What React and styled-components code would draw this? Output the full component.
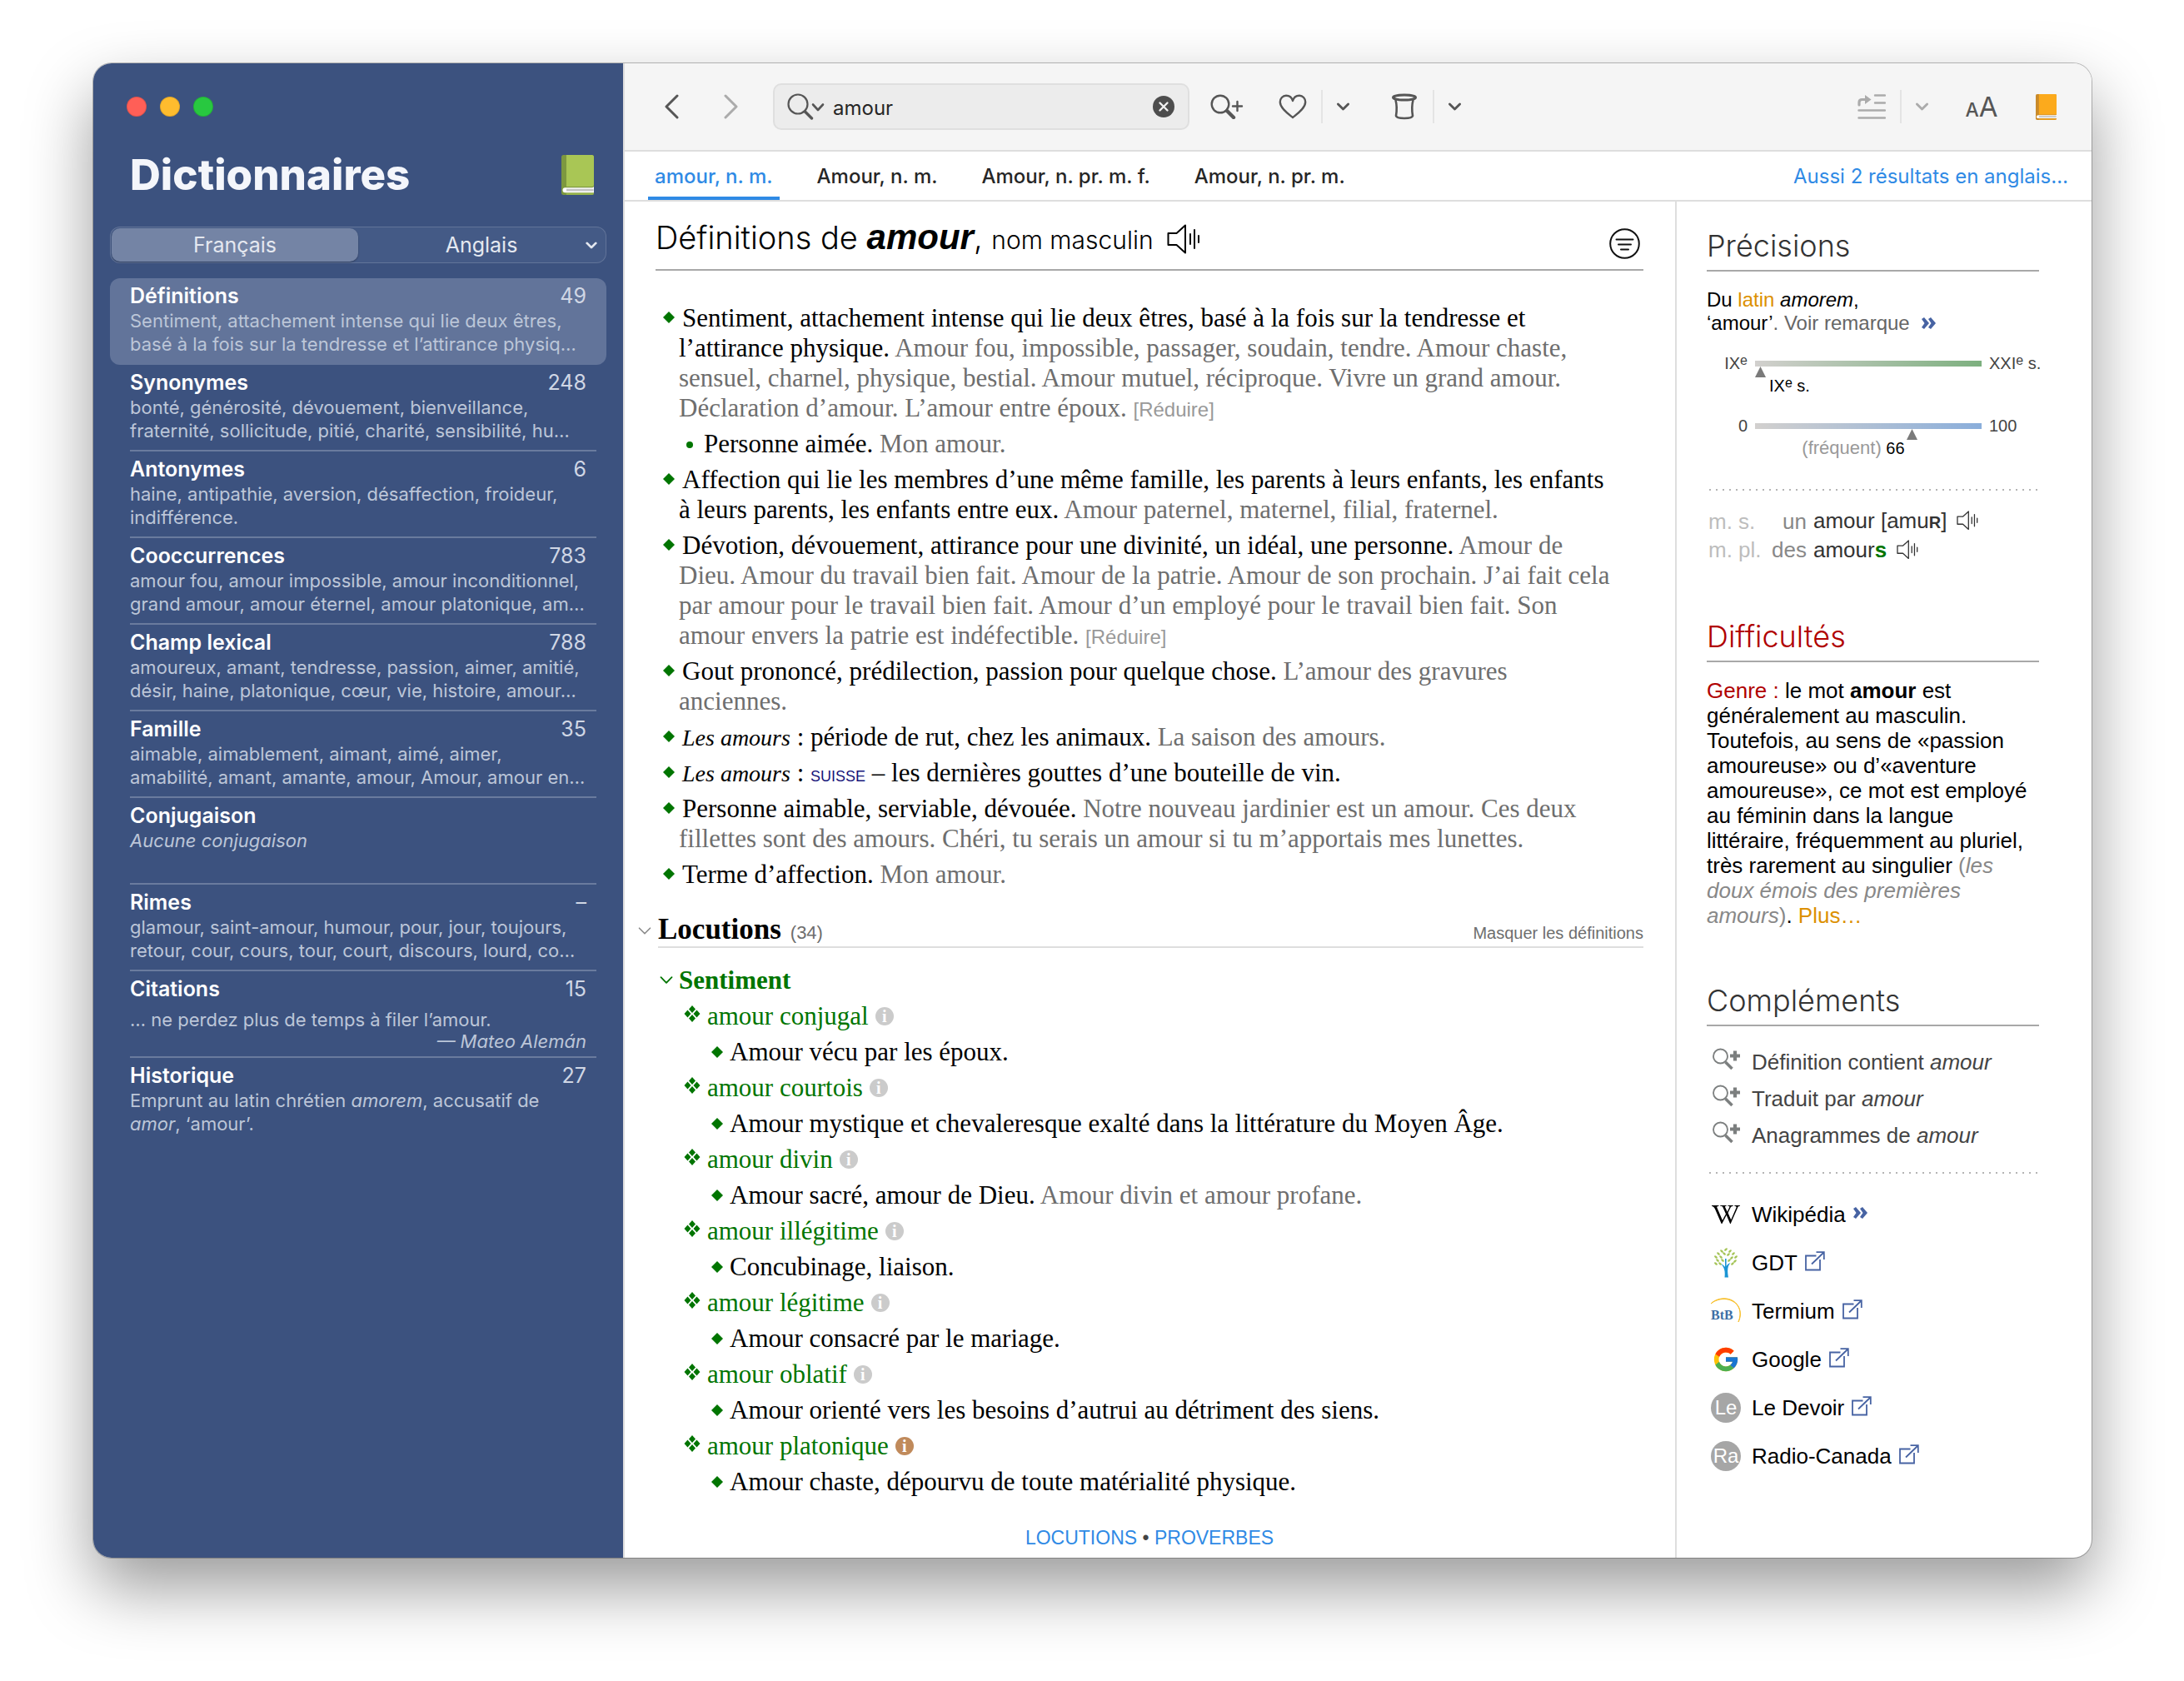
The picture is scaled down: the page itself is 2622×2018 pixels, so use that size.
import React, { useState } from 'react';
import styled, { createGlobalStyle } from 'styled-components';
import { FcGoogle } from 'react-icons/fc';
import { FaWikipediaW } from 'react-icons/fa6';

const colors = {
  navy: '#3c527f',
  blue: '#2f8ae5',
  link: '#4763a3',
  green: '#007500',
  red: '#b00000',
  orange: '#dc9000',
  line: '#dedede',
  rule: '#a8a8a8',
  icon: '#565656',
  example: '#6e6e6e',
};

const fonts = {
  ui: "'Inter', 'Liberation Sans', sans-serif",
  sans: "'Liberation Sans', Arial, sans-serif",
  serif: "'Liberation Serif', 'Times New Roman', serif",
};

const GlobalStyle = createGlobalStyle`
  *, *::before, *::after {
    box-sizing: border-box;
  }
  body {
    margin: 0;
    background: #fff;
    font-family: ${fonts.sans};
    color: #000;
  }
  button {
    border: none;
    padding: 0;
    background: none;
    font: inherit;
    color: inherit;
    cursor: pointer;
  }
  a {
    color: inherit;
    text-decoration: none;
  }
  h1, h2, h3, p, ul {
    margin: 0;
    padding: 0;
  }
  ul {
    list-style: none;
  }
  svg {
    display: block;
    flex: none;
  }
`;

const Page = styled.div`
  display: flex;
  min-height: 100vh;
  padding: 76px 111px 148px 112px;
`;

const Window = styled.div`
  display: flex;
  flex: 1;
  border-radius: 22px;
  overflow: hidden;
  background: #fff;
  box-shadow: 0 0 0 1px rgba(0, 0, 0, 0.25), 0 36px 80px rgba(0, 0, 0, 0.4);
`;

/* Sidebar */

const Sidebar = styled.nav`
  flex: none;
  width: 638px;
  padding: 40px 20px 0;
  border-right: 2px solid ${colors.line};
  background: ${colors.navy};
  font-family: ${fonts.ui};
`;

const Lights = styled.div`
  display: flex;
  gap: 16px;
  padding-left: 20px;
`;

const Light = styled.button`
  width: 24px;
  height: 24px;
  border-radius: 50%;
  border: 1px solid rgba(0, 0, 0, 0.12);
  background: ${({ color }) => color};
`;

const SidebarHead = styled.div`
  display: flex;
  align-items: center;
  justify-content: space-between;
  margin-top: 40px;
  padding: 0 15px 0 24px;
`;

const SidebarTitle = styled.h1`
  font-size: 51px;
  line-height: 60px;
  font-weight: 800;
  color: #f4f6fb;
`;

const Segments = styled.div`
  display: flex;
  height: 44px;
  margin-top: 32px;
  padding: 1px;
  border: 1px solid rgba(255, 255, 255, 0.16);
  border-radius: 12px;
  background: #445a86;
`;

const Segment = styled.button`
  flex: 1;
  border-radius: 10px;
  font-size: 25px;
  color: #e4e8f0;
  background: ${({ $active }) => $active ? '#7484a5' : 'transparent'};
  box-shadow: ${({ $active }) => $active ? '0 1px 2px rgba(0, 0, 0, 0.3)' : 'none'};
`;

const SegmentWrapper = styled.div`
  display: flex;
  flex: 1;
  align-items: stretch;
`;

const SegmentMenu = styled.button`
  display: flex;
  align-items: center;
  justify-content: center;
  width: 32px;
  margin-left: -32px;
`;

const Sections = styled.ul`
  margin-top: 18px;
`;

const SectionItem = styled.li`
  height: 104px;
  padding: 0 12px 0 24px;
  border-radius: 12px;
  background: ${({ $active }) => $active ? '#62749a' : 'transparent'};
`;

const SectionLink = styled.a`
  display: block;
  height: 100%;
  padding-top: 5px;
  border-bottom: 2px solid ${({ $ruled }) => $ruled ? '#6a7b9e' : 'transparent'};
`;

const SectionHead = styled.span`
  display: flex;
  justify-content: space-between;
  padding-right: 12px;
  font-size: 25px;
  line-height: 32px;
  color: #d0d7e5;
`;

const SectionName = styled.span`
  font-weight: 600;
  color: #fff;
`;

const Preview = styled.span`
  display: block;
  font-size: 22px;
  line-height: 28px;
  white-space: nowrap;
  color: #bcc6d8;
`;

const Quote = styled(Preview)`
  padding: 8px 12px 0 0;
  line-height: 26px;
`;

const Author = styled.em`
  display: block;
  text-align: right;
`;

/* Toolbar and tabs */

const Content = styled.div`
  display: flex;
  flex: 1;
  flex-direction: column;
  min-width: 0;
`;

const Toolbar = styled.header`
  display: flex;
  align-items: center;
  height: 106px;
  padding: 0 16px 0 20px;
  border-bottom: 2px solid ${colors.line};
  background: #f5f5f5;
  font-family: ${fonts.ui};
  color: ${colors.icon};
`;

const ToolButton = styled.button`
  display: flex;
  align-items: center;
  justify-content: center;
  width: ${({ $width }) => $width || 72}px;
  height: 56px;
  color: ${({ $dim }) => $dim ? '#ababab' : 'inherit'};
`;

const ToolGroup = styled.div`
  display: flex;
  align-items: center;
  margin-right: ${({ $last }) => $last ? 10 : 16}px;
`;

const Separator = styled.span`
  width: 2px;
  height: 40px;
  background: #e4e4e4;
`;

const Spacer = styled.div`
  flex: 1;
`;

const SearchField = styled.label`
  display: flex;
  align-items: center;
  gap: 10px;
  width: 500px;
  height: 56px;
  margin-left: 14px;
  padding: 0 16px 0 15px;
  border: 2px solid #dfdfdf;
  border-radius: 10px;
  background: #ececec;
`;

const SearchInput = styled.input`
  flex: 1;
  min-width: 0;
  padding: 2px 0 0;
  border: none;
  outline: none;
  background: transparent;
  font: 24px ${fonts.ui};
  color: #262626;
`;

const TabBar = styled.div`
  display: flex;
  align-items: stretch;
  gap: 37px;
  height: 60px;
  padding: 0 28px;
  border-bottom: 2px solid ${colors.line};
  font-family: ${fonts.ui};
`;

const Tab = styled.button`
  padding: 4px 8px 0;
  border-bottom: 4px solid ${({ $active }) => $active ? colors.blue : 'transparent'};
  font-size: 24px;
  font-weight: 500;
  color: ${({ $active }) => $active ? colors.blue : '#262626'};
`;

const OtherResults = styled.a`
  margin-left: auto;
  font-size: 24px;
  line-height: 60px;
  color: ${colors.blue};
`;

/* Article */

const Columns = styled.div`
  display: flex;
  flex: 1;
`;

const Article = styled.main`
  display: flex;
  flex: 1;
  flex-direction: column;
  min-width: 0;
  padding: 0 38px 9px 37px;
`;

const ArticleHead = styled.div`
  display: flex;
  align-items: flex-start;
  justify-content: space-between;
  padding: 19px 4px 11px 0;
  border-bottom: 2px solid ${colors.rule};
`;

const ArticleTitle = styled.h1`
  display: flex;
  align-items: baseline;
  font-family: ${fonts.ui};
  font-size: 38px;
  line-height: 48px;
  font-weight: 300;
  white-space: pre;

  em {
    font-family: ${fonts.sans};
    font-size: 42px;
    font-weight: 700;
  }
`;

const WordClass = styled.span`
  margin-right: 16px;
  font-size: 30px;
`;

const FilterButton = styled.button`
  margin-top: 13px;
`;

const SoundButton = styled.button`
  display: inline-block;
  vertical-align: middle;
  align-self: center;
`;

const Definitions = styled.ul`
  display: flex;
  flex-direction: column;
  gap: 7px;
  margin-top: 39px;
  font: 31px/36px ${fonts.serif};
`;

const Definition = styled.li`
  padding-left: ${({ $sub }) => $sub ? 54 : 28}px;
  text-indent: ${({ $sub }) => $sub ? -17 : -19}px;

  svg {
    display: inline-block;
    vertical-align: 4px;
    margin-right: ${({ $sub }) => $sub ? 13 : 9}px;
  }
  i {
    font-size: 28px;
    line-height: 1;
  }
`;

const Example = styled.span`
  color: ${colors.example};
`;

const Region = styled.abbr`
  font: 18px/1 ${fonts.sans};
  text-transform: uppercase;
  color: #15157a;
`;

const Toggle = styled.button`
  font-family: ${fonts.sans};
  font-size: ${({ $small }) => $small ? 20 : 24}px;
  line-height: 24px;
  text-indent: 0;
  color: ${({ $small }) => $small ? colors.example : '#999'};
`;

const GroupRow = styled.div`
  display: flex;
  align-items: center;
  gap: 8px;
  margin: 28px 0 17px -21px;
  
  > svg {
    color: #8a8a8a;
  }
`;

const GroupHead = styled.div`
  display: flex;
  flex: 1;
  align-items: baseline;
  border-bottom: 2px solid ${colors.line};
`;

const GroupTitle = styled.h2`
  font: bold 35px/40px ${fonts.serif};
`;

const GroupCount = styled.span`
  margin: 0 auto 0 11px;
  font-size: 22px;
  color: ${colors.example};
`;

const SenseRow = styled.div`
  display: flex;
  align-items: center;
  gap: 7px;
  padding-left: 5px;
  color: ${colors.green};
`;

const SenseTitle = styled.h3`
  font: bold 31px/43px ${fonts.serif};
`;

const Phrase = styled.li`
  font: 31px/43px ${fonts.serif};
`;

const PhraseTerm = styled.div`
  display: flex;
  align-items: center;
  gap: 8px;
  padding-left: 34px;
  color: ${colors.green};
`;

const PhraseMeaning = styled.div`
  display: flex;
  align-items: center;
  gap: 8px;
  padding-left: 67px;
`;

const Info = styled.button`
  width: 22px;
  height: 22px;
  border-radius: 50%;
  background: ${({ $marked }) => $marked ? '#c08a5b' : '#cbcbcb'};
  font: bold 20px/22px ${fonts.serif};
  color: #fff;
`;

const JumpLinks = styled.div`
  margin-top: auto;
  font-size: 23px;
  line-height: 30px;
  text-align: center;
  color: #444;

  a {
    color: ${colors.blue};
  }
`;

/* Right column */

const Aside = styled.aside`
  flex: none;
  width: 500px;
  padding: 31px 63px 40px 36px;
  border-left: 2px solid ${colors.line};
`;

const AsideTitle = styled.h2`
  margin-top: ${({ $first }) => $first ? 0 : 65}px;
  padding-bottom: 7px;
  border-bottom: 2px solid ${colors.rule};
  font-family: ${fonts.ui};
  font-size: 36px;
  line-height: 44px;
  font-weight: 300;
  color: ${({ $alert }) => $alert ? colors.red : '#333'};
`;

const Etymology = styled.p`
  margin: 20px 0 22px;
  font-size: 24px;
  line-height: 28px;

  span {
    color: #666;
  }
`;

const Accent = styled.a`
  color: ${colors.orange};
`;

const Warning = styled.span`
  color: ${colors.red};
`;

const More = styled.a`
  display: inline-block;
  margin-left: 14px;
`;

const Scale = styled.div`
  display: grid;
  grid-template-columns: 49px 272px 1fr;
  column-gap: 9px;
  row-gap: 3px;
  align-items: center;
  margin-bottom: 24px;
  font-size: 20px;
  line-height: 24px;
  white-space: nowrap;
  color: #444;

  sup {
    font-size: 16px;
    line-height: 0;
    vertical-align: 5px;
  }
`;

const ScaleStart = styled.span`
  text-align: right;
`;

const ScaleBar = styled.span`
  position: relative;
  height: 7px;
  background: linear-gradient(to right, #d2d0ce, ${({ color }) => color});
`;

const ScaleMarker = styled.svg`
  position: absolute;
  top: 7px;
`;

const ScaleCaption = styled.span`
  grid-column: 2;
  text-align: ${({ $align }) => $align};
  color: #000;

  small {
    font-size: 22px;
    color: #999;
  }
`;

const Dots = styled.hr`
  height: 2px;
  margin: ${({ $gap }) => $gap}px 0 20px 3px;
  border: none;
  background: repeating-linear-gradient(to right, #b4b4b4 0 2px, transparent 2px 8px);
`;

const Forms = styled.table`
  margin-left: 2px;
  border-collapse: collapse;
  font-size: 26px;
  line-height: 33px;
  white-space: nowrap;
  color: #333;

  th, td {
    padding: 0;
    font-weight: 400;
    text-align: left;
  }
  th {
    width: 72px;
    color: #bdbdbd;
  }
  td:nth-child(2) {
    width: 46px;
    text-align: right;
    color: #888;
  }
  td:nth-child(3) {
    padding-left: 8px;
  }
  b {
    color: ${colors.green};
  }
  small {
    font-size: 20px;
    font-weight: 700;
  }
  button {
    margin: -4px 0 0 12px;
  }
`;

const Note = styled.p`
  margin-top: 19px;
  font-size: 26px;
  line-height: 30px;
  white-space: nowrap;
`;

const Muted = styled.span`
  color: #888;
`;

const LinkList = styled.ul`
  margin-top: ${({ $top }) => $top || 0}px;
  font-size: 26px;
  line-height: ${({ $row }) => $row}px;
  color: ${({ color }) => color};
`;

const LinkRow = styled.a`
  display: flex;
  align-items: center;
  white-space: pre;

  > svg:last-child {
    margin: 0 0 4px 9px;
  }
`;

const LinkIcon = styled.span`
  display: flex;
  align-items: center;
  justify-content: center;
  width: 36px;
  height: 36px;
  margin: 0 13px 0 5px;
`;

const Initials = styled(LinkIcon)`
  border-radius: 50%;
  background: #a6a6a6;
  font-size: 24px;
  color: #fff;
`;

/* Icons */

const Chevron = ({ width = 16, height = 9, stroke = 3 }) => (
  <svg width={width} height={height} viewBox="0 0 16 9" fill="none" stroke="currentColor"
    strokeWidth={stroke} strokeLinecap="round" strokeLinejoin="round">
    <path d="M1.5 1.2 8 7.8l6.5-6.6" />
  </svg>
);

const Arrow = ({ back }) => (
  <svg width="18" height="30" viewBox="0 0 18 30" fill="none" stroke="currentColor"
    strokeWidth="3" strokeLinecap="round" strokeLinejoin="round">
    <path d={back ? 'M16 2 3 15l13 13' : 'M2 2l13 13L2 28'} />
  </svg>
);

const SearchIcon = () => (
  <svg width="45" height="32" viewBox="0 0 45 32" fill="none" stroke="currentColor" strokeLinecap="round">
    <circle cx="13" cy="13" r="11.5" strokeWidth="2.2" />
    <path d="m21.5 22 8 8" strokeWidth="3.4" />
    <path d="m31 13.5 6 6.5 6-6.5" strokeWidth="2.6" strokeLinejoin="round" />
  </svg>
);

const ClearIcon = () => (
  <svg width="26" height="26" viewBox="0 0 26 26">
    <circle cx="13" cy="13" r="13" fill="#4d4d4d" />
    <path d="m8.5 8.5 9 9m0-9-9 9" stroke="#f0f0f0" strokeWidth="2.4" strokeLinecap="round" />
  </svg>
);

const SearchPlusIcon = () => (
  <svg width="40" height="30" viewBox="0 0 40 30" fill="none" stroke="currentColor" strokeLinecap="round">
    <circle cx="12" cy="12" r="10.3" strokeWidth="2.4" />
    <path d="m20 20 8 8" strokeWidth="4.4" />
    <path d="M27 14.5h11M32.5 9v11" strokeWidth="2.4" />
  </svg>
);

const HeartIcon = () => (
  <svg width="34" height="30" viewBox="0 0 34 30" fill="none" stroke="currentColor" strokeWidth="2.4" strokeLinejoin="round">
    <path d="M17 28C12 24 1.8 17 1.8 9.5 1.8 5 5 1.8 9 1.8c4 0 7 2.7 8 6.2 1-3.500 4-6.200 8-6.200 4 0 7.200 3.200 7.200 7.700C32.200 17 22 24 17 28Z" />
  </svg>
);

const JarIcon = () => (
  <svg width="32" height="32" viewBox="0 0 32 32" fill="none" stroke="currentColor">
    <ellipse cx="16" cy="5" rx="13.5" ry="3" strokeWidth="3" />
    <path d="M5.5 8c1.5 6 1.5 13 .5 19 .4 2.2 4.5 3 10 3s9.6-.8 10-3c-1-6-1-13 .5-19" strokeWidth="2.6" />
  </svg>
);

const IndentIcon = () => (
  <svg width="34" height="32" viewBox="0 0 34 32" fill="none" stroke="currentColor" strokeWidth="2.4" strokeLinecap="round">
    <path d="M2 14v-3c0-2.500 1-3.500 3.500-3.500H10" strokeWidth="3.2" />
    <path d="M9 2 16.500 7.500 9 13Z" fill="currentColor" stroke="none" />
    <path d="M21 2.5h12M21 11.500h12M1.500 20.500H33M1.500 29.500H33" />
  </svg>
);

const FontSizeIcon = styled.span`
  font-size: 23px;
  font-weight: 500;

  big {
    font-size: 33px;
    font-weight: 400;
  }
`;

const BookIcon = ({ width, height, cover, spine }) => (
  <svg width={width} height={height} viewBox="0 0 39 48">
    <rect width="39" height="48" rx="2.5" fill={spine} />
    <path d="M6 0h30.5A2.500 2.500 0 0 1 39 2.500V36a2 2 0 0 1-2 2H6Z" fill={cover} />
    <path d="M6 45.500h33V46a2 2 0 0 1-2 2H6Z" fill={cover} opacity=".6" />
    <path d="M39 37.500c0 1-1 1.700-2 1.700H4.500a3 3 0 0 0 0 6H39Z" fill="#fff" />
    <path d="M38.500 40.700H6v2.800h32.500Z" fill="#c4c4c4" />
  </svg>
);

const SoundIcon = ({ size = 40 }) => (
  <svg width={size} height={size * 0.9} viewBox="0 0 40 36" fill="none" stroke="currentColor" strokeWidth="2" strokeLinecap="round" strokeLinejoin="round">
    <path d="M1.5 11v14h10l10.500 9.500v-33L11.500 11Z" />
    <path d="M28 12v12M33 7v22M38 14v8" />
  </svg>
);

const FilterIcon = () => (
  <svg width="37" height="37" viewBox="0 0 37 37" fill="none" stroke="#111" strokeWidth="2" strokeLinecap="round">
    <circle cx="18.5" cy="18.5" r="17.3" />
    <path d="M8.500 13.500h20M11 19.500h15M14 25.500h9" />
  </svg>
);

const Diamond = () => (
  <svg width="14" height="14" viewBox="0 0 14 14" fill={colors.green}>
    <path d="m7 0 7 7-7 7-7-7Z" />
  </svg>
);

const Dot = () => (
  <svg width="8" height="14" viewBox="0 0 8 14" fill={colors.green}>
    <circle cx="4" cy="9" r="4" />
  </svg>
);

const FourDiamonds = () => (
  <svg width="20" height="26" viewBox="0 0 20 26" fill={colors.green}>
    <path d="m10 0 4 4.500L10 9 6 4.500ZM4.500 5.500l4 4.500-4 4.500-4-4.500ZM15.500 5.500l4 4.500-4 4.500-4-4.500ZM10 11l4 4.500-4 4.500-4-4.500Z" />
  </svg>
);

const DoubleArrow = () => (
  <svg width="18" height="16" viewBox="0 0 18 16" fill={colors.link}>
    <path d="M0 3 3 1l6 7-6 7-3-2 3.500-5ZM8 3l3-2 6 7-6 7-3-2 3.500-5Z" />
  </svg>
);

const ExternalIcon = () => (
  <svg width="24" height="24" viewBox="0 0 24 24" fill="none" stroke={colors.link} strokeWidth="1.8">
    <path d="M13.500 5.500H1v17h17V10" />
    <path d="M13.500 1.200h9.300V10M8 15.500 22.500 1.500" />
  </svg>
);

const SmallSearchPlus = () => (
  <svg width="34" height="36" viewBox="0 0 34 36" fill="none" stroke="#7c7f7f">
    <circle cx="10.5" cy="11" r="8.5" strokeWidth="1.8" />
    <path d="m16.500 18 8 8" strokeWidth="3.6" />
    <path d="M22 10.500h12M28 4.500v12" strokeWidth="4.2" />
  </svg>
);

const leaves = [
  [13, 1], [8, 3], [18, 3], [4, 6], [11, 6], [16, 7], [22, 6], [1, 10], [7, 10],
  [20, 11], [25, 10], [3, 14], [9, 14], [17, 14], [24, 15], [1, 18], [6, 18], [21, 18],
];

const TreeIcon = () => (
  <svg width="28" height="36" viewBox="0 0 28 36">
    {leaves.map(([x, y]) => (
      <ellipse key={`${x}-${y}`} cx={x + 1} cy={y + 1} rx="2.2" ry="1.2" fill="#a6c55a"
        transform={`rotate(${x < 13 ? 40 : -40} ${x + 1} ${y + 1})`} />
    ))}
    <path d="M12.500 35.500c.6-6 .5-11-4.500-16.500 2 .8 3.700 2.300 5 4V13h1.600v9c1-1.800 2.600-3.200 4.800-4-3 3.500-4.200 8-2.400 17.500Z" fill="#1b95d4" />
  </svg>
);

const BtbIcon = () => (
  <svg width="38" height="34" viewBox="0 0 38 34">
    <path d="M1 8C12-1 30 1 35 14c2 5 1 11-1 16 6-12 0-26-14-28C12 1 5 4 1 8Z" fill="#f8c02c" stroke="#f8c02c" strokeWidth="1" />
    <text x="1" y="27" fontFamily="Liberation Serif, serif" fontWeight="700" fontSize="16" fill="#3d6ea5">BtB</text>
  </svg>
);

/* Data */

const sections = [
  { name: 'Définitions', count: '49', lines: ['Sentiment, attachement intense qui lie deux êtres,', 'basé à la fois sur la tendresse et l’attirance physiq…'] },
  { name: 'Synonymes', count: '248', lines: ['bonté, générosité, dévouement, bienveillance,', 'fraternité, sollicitude, pitié, charité, sensibilité, hu…'] },
  { name: 'Antonymes', count: '6', lines: ['haine, antipathie, aversion, désaffection, froideur,', 'indifférence.'] },
  { name: 'Cooccurrences', count: '783', lines: ['amour fou, amour impossible, amour inconditionnel,', 'grand amour, amour éternel, amour platonique, am…'] },
  { name: 'Champ lexical', count: '788', lines: ['amoureux, amant, tendresse, passion, aimer, amitié,', 'désir, haine, platonique, cœur, vie, histoire, amour…'] },
  { name: 'Famille', count: '35', lines: ['aimable, aimablement, aimant, aimé, aimer,', 'amabilité, amant, amante, amour, Amour, amour en…'] },
  { name: 'Conjugaison', count: '', lines: [<em>Aucune conjugaison</em>] },
  { name: 'Rimes', count: '–', lines: ['glamour, saint-amour, humour, pour, jour, toujours,', 'retour, cour, cours, tour, court, discours, lourd, co…'] },
  { name: 'Citations', count: '15', quote: '… ne perdez plus de temps à filer l’amour.', author: '— Mateo Alemán' },
  { name: 'Historique', count: '27', lines: [<>Emprunt au latin chrétien <em>amorem</em>, accusatif de</>, <><em>amor</em>, ‘amour’.</>] },
];

const tabs = ['amour, n. m.', 'Amour, n. m.', 'Amour, n. pr. m. f.', 'Amour, n. pr. m.'];

const phrases = [
  { term: 'amour conjugal', meaning: 'Amour vécu par les époux.' },
  { term: 'amour courtois', meaning: 'Amour mystique et chevaleresque exalté dans la littérature du Moyen Âge.' },
  { term: 'amour divin', meaning: 'Amour sacré, amour de Dieu.', example: 'Amour divin et amour profane.' },
  { term: 'amour illégitime', meaning: 'Concubinage, liaison.' },
  { term: 'amour légitime', meaning: 'Amour consacré par le mariage.' },
  { term: 'amour oblatif', meaning: 'Amour orienté vers les besoins d’autrui au détriment des siens.' },
  { term: 'amour platonique', meaning: 'Amour chaste, dépourvu de toute matérialité physique.', marked: true },
];

const searches = ['Définition contient', 'Traduit par', 'Anagrammes de'];

const sites = [
  { name: 'Wikipédia', icon: <FaWikipediaW size={34} />, internal: true },
  { name: 'GDT', icon: <TreeIcon /> },
  { name: 'Termium', icon: <BtbIcon /> },
  { name: 'Google', icon: <FcGoogle size={34} /> },
  { name: 'Le Devoir', initials: 'Le' },
  { name: 'Radio-Canada', initials: 'Ra' },
];

function SidebarPanel() {
  const [current, setCurrent] = useState('Définitions');

  return (
    <Sidebar>
      <Lights>
        <Light color="#ff5f57" aria-label="Fermer" />
        <Light color="#febc2e" aria-label="Réduire" />
        <Light color="#28c840" aria-label="Agrandir" />
      </Lights>
      <SidebarHead>
        <SidebarTitle>Dictionnaires</SidebarTitle>
        <BookIcon width={39} height={48} cover="#a9c655" spine="#7d983f" />
      </SidebarHead>
      <Segments>
        <Segment $active>Français</Segment>
        <SegmentWrapper>
          <Segment>Anglais</Segment>
          <SegmentMenu aria-label="Autres langues"><svg width="14" height="9" viewBox="0 0 16 9" fill="none" stroke="#e4e8f0" strokeWidth="3.2" strokeLinecap="round" strokeLinejoin="round"><path d="M2 1.500 8 7.500l6-6" /></svg></SegmentMenu>
        </SegmentWrapper>
      </Segments>
      <Sections>
        {sections.map(({ name, count, lines, quote, author }, index) => (
          <SectionItem key={name} $active={name === current}>
            <SectionLink
              href={`#${name}`}
              $ruled={name !== current && index < sections.length - 1}
              onClick={() => setCurrent(name)}
            >
              <SectionHead>
                <SectionName>{name}</SectionName>
                <span>{count}</span>
              </SectionHead>
              {lines && lines.map((line, i) => <Preview key={i}>{line}</Preview>)}
              {quote && <Quote>{quote}<Author>{author}</Author></Quote>}
            </SectionLink>
          </SectionItem>
        ))}
      </Sections>
    </Sidebar>
  );
}

function MainToolbar() {
  const [query, setQuery] = useState('amour');

  return (
    <Toolbar>
      <ToolButton aria-label="Précédent"><Arrow back /></ToolButton>
      <ToolButton aria-label="Suivant" $dim><Arrow /></ToolButton>
      <SearchField>
        <SearchIcon />
        <SearchInput aria-label="Rechercher" value={query} onChange={(e) => setQuery(e.target.value)} />
        <button aria-label="Effacer" onClick={() => setQuery('')}><ClearIcon /></button>
      </SearchField>
      <ToolButton $width={90} aria-label="Recherche avancée"><SearchPlusIcon /></ToolButton>
      <ToolGroup>
        <ToolButton $width={68} aria-label="Favoris"><HeartIcon /></ToolButton>
        <Separator />
        <ToolButton $width={48} aria-label="Liste des favoris"><Chevron width={15} height={10} /></ToolButton>
      </ToolGroup>
      <ToolGroup>
        <ToolButton $width={68} aria-label="Bocal"><JarIcon /></ToolButton>
        <Separator />
        <ToolButton $width={48} aria-label="Contenu du bocal"><Chevron width={15} height={10} /></ToolButton>
      </ToolGroup>
      <Spacer />
      <ToolGroup $last>
        <ToolButton $width={68} $dim aria-label="Insérer"><IndentIcon /></ToolButton>
        <Separator />
        <ToolButton $width={48} $dim aria-label="Options d’insertion"><Chevron width={15} height={10} /></ToolButton>
      </ToolGroup>
      <ToolButton $width={76} aria-label="Taille du texte"><FontSizeIcon>A<big>A</big></FontSizeIcon></ToolButton>
      <ToolButton $width={78} aria-label="Guides"><BookIcon width={25} height={31} cover="#fcaa1c" spine="#c98a2a" /></ToolButton>
    </Toolbar>
  );
}

function DefinitionList() {
  return (
    <Definitions>
      <Definition>
        <Diamond />Sentiment, attachement intense qui lie deux êtres, basé à la fois sur la tendresse et<br />
        l’attirance physique. <Example>Amour fou, impossible, passager, soudain, tendre. Amour chaste,<br />
        sensuel, charnel, physique, bestial. Amour mutuel, réciproque. Vivre un grand amour.<br />
        Déclaration d’amour. L’amour entre époux.</Example> <Toggle>[Réduire]</Toggle>
      </Definition>
      <Definition $sub><Dot />Personne aimée. <Example>Mon amour.</Example></Definition>
      <Definition>
        <Diamond />Affection qui lie les membres d’une même famille, les parents à leurs enfants, les enfants<br />
        à leurs parents, les enfants entre eux. <Example>Amour paternel, maternel, filial, fraternel.</Example>
      </Definition>
      <Definition>
        <Diamond />Dévotion, dévouement, attirance pour une divinité, un idéal, une personne. <Example>Amour de<br />
        Dieu. Amour du travail bien fait. Amour de la patrie. Amour de son prochain. J’ai fait cela<br />
        par amour pour le travail bien fait. Amour d’un employé pour le travail bien fait. Son<br />
        amour envers la patrie est indéfectible.</Example> <Toggle>[Réduire]</Toggle>
      </Definition>
      <Definition>
        <Diamond />Gout prononcé, prédilection, passion pour quelque chose. <Example>L’amour des gravures<br />
        anciennes.</Example>
      </Definition>
      <Definition><Diamond /><i>Les amours</i> : période de rut, chez les animaux. <Example>La saison des amours.</Example></Definition>
      <Definition><Diamond /><i>Les amours</i> : <Region>Suisse</Region> – les dernières gouttes d’une bouteille de vin.</Definition>
      <Definition>
        <Diamond />Personne aimable, serviable, dévouée. <Example>Notre nouveau jardinier est un amour. Ces deux<br />
        fillettes sont des amours. Chéri, tu serais un amour si tu m’apportais mes lunettes.</Example>
      </Definition>
      <Definition><Diamond />Terme d’affection. <Example>Mon amour.</Example></Definition>
    </Definitions>
  );
}

function Details() {
  return (
    <Aside>
      <AsideTitle $first>Précisions</AsideTitle>
      <Etymology>
        Du <Accent href="#latin">latin</Accent> <i>amorem</i>,<br />
        ‘amour’<span>. Voir remarque</span><More href="#remarque" aria-label="Remarque"><DoubleArrow /></More>
      </Etymology>
      <Scale>
        <ScaleStart>IX<sup>e</sup></ScaleStart>
        <ScaleBar color="#7db07f">
          <ScaleMarker width="13" height="13" viewBox="0 0 13 13" style={{ left: '0%' }}><path d="M6.500 0 13 13H0Z" fill="#7a7a7a" /></ScaleMarker>
        </ScaleBar>
        <span>XXI<sup>e</sup> s.</span>
        <ScaleCaption $align="left" style={{ paddingLeft: 17 }}>IX<sup>e</sup> s.</ScaleCaption>
      </Scale>
      <Scale>
        <ScaleStart>0</ScaleStart>
        <ScaleBar color="#8aaedb">
          <ScaleMarker width="13" height="13" viewBox="0 0 13 13" style={{ left: '67%' }}><path d="M6.500 0 13 13H0Z" fill="#7a7a7a" /></ScaleMarker>
        </ScaleBar>
        <span>100</span>
        <ScaleCaption $align="right" style={{ paddingRight: '34%' }}><small>(fréquent)</small> 66</ScaleCaption>
      </Scale>
      <Dots $gap={37} />
      <Forms>
        <tbody>
          <tr>
            <th scope="row">m. s.</th>
            <td>un</td>
            <td>amour [amu<small>R</small>]<SoundButton aria-label="Écouter amour"><SoundIcon size={26} /></SoundButton></td>
          </tr>
          <tr>
            <th scope="row">m. pl.</th>
            <td>des</td>
            <td>amour<b>s</b><SoundButton aria-label="Écouter amours"><SoundIcon size={26} /></SoundButton></td>
          </tr>
        </tbody>
      </Forms>
      <AsideTitle $alert>Difficultés</AsideTitle>
      <Note>
        <Warning>Genre :</Warning> le mot <b>amour</b> est<br />
        généralement au masculin.<br />
        Toutefois, au sens de «passion<br />
        amoureuse» ou d’«aventure<br />
        amoureuse», ce mot est employé<br />
        au féminin dans la langue<br />
        littéraire, fréquemment au pluriel,<br />
        très rarement au singulier <Muted>(<i>les<br />
        doux émois des premières<br />
        amours</i>)</Muted>. <Accent href="#plus">Plus…</Accent>
      </Note>
      <AsideTitle>Compléments</AsideTitle>
      <LinkList $top={21} $row={44} color="#444">
        {searches.map((label) => (
          <li key={label}>
            <LinkRow href="#recherche"><LinkIcon><SmallSearchPlus /></LinkIcon>{label} <i>amour</i></LinkRow>
          </li>
        ))}
      </LinkList>
      <Dots $gap={22} />
      <LinkList $row={58}>
        {sites.map(({ name, icon, initials, internal }) => (
          <li key={name}>
            <LinkRow href={`#${name}`}>
              {initials ? <Initials>{initials}</Initials> : <LinkIcon>{icon}</LinkIcon>}
              {name}
              {internal ? <DoubleArrow /> : <ExternalIcon />}
            </LinkRow>
          </li>
        ))}
      </LinkList>
    </Aside>
  );
}

export default function App() {
  const [tab, setTab] = useState(0);

  return (
    <Page>
      <GlobalStyle />
      <Window>
        <SidebarPanel />
        <Content>
          <MainToolbar />
          <TabBar>
            {tabs.map((label, index) => (
              <Tab key={label} $active={index === tab} onClick={() => setTab(index)}>{label}</Tab>
            ))}
            <OtherResults href="#anglais">Aussi 2 résultats en anglais…</OtherResults>
          </TabBar>
          <Columns>
            <Article>
              <ArticleHead>
                <ArticleTitle>
                  Définitions de <em>amour</em>, <WordClass>nom masculin</WordClass>
                  <SoundButton aria-label="Écouter"><SoundIcon /></SoundButton>
                </ArticleTitle>
                <FilterButton aria-label="Filtrer"><FilterIcon /></FilterButton>
              </ArticleHead>
              <DefinitionList />
              <GroupRow>
                <Chevron stroke={1.6} />
                <GroupHead>
                  <GroupTitle>Locutions</GroupTitle>
                  <GroupCount>(34)</GroupCount>
                  <Toggle $small>Masquer les définitions</Toggle>
                </GroupHead>
              </GroupRow>
              <SenseRow><Chevron stroke={1.8} /><SenseTitle>Sentiment</SenseTitle></SenseRow>
              <ul>
                {phrases.map(({ term, meaning, example, marked }) => (
                  <Phrase key={term}>
                    <PhraseTerm><FourDiamonds />{term}<Info $marked={marked} aria-label="Information">i</Info></PhraseTerm>
                    <PhraseMeaning>
                      <Diamond />
                      <span>{meaning}{example && <Example> {example}</Example>}</span>
                    </PhraseMeaning>
                  </Phrase>
                ))}
              </ul>
              <JumpLinks><a href="#locutions">LOCUTIONS</a> • <a href="#proverbes">PROVERBES</a></JumpLinks>
            </Article>
            <Details />
          </Columns>
        </Content>
      </Window>
    </Page>
  );
}
